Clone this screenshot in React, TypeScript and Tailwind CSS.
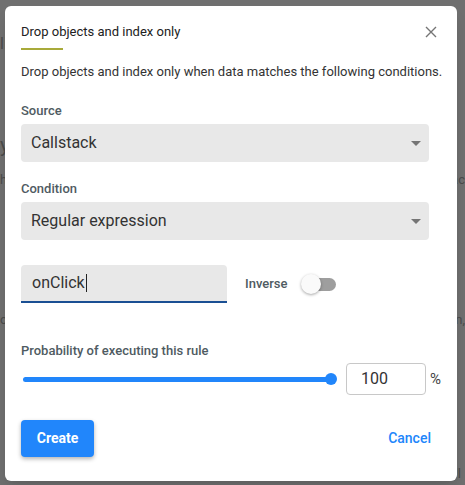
const BLUE = '#2186fb';

function Caret() {
  return (
    <svg width="10" height="5" viewBox="0 0 10 5" className="shrink-0">
      <path d="M0 0 L10 0 L5 5 Z" fill="#757575" />
    </svg>
  );
}

function SelectBox({ value }: { value: string }) {
  return (
    <div className="mt-[5px] flex h-[38px] items-center justify-between rounded bg-[#e8e8e8] pl-[10px] pr-[8px]">
      <span className="text-[16px] text-[#333333]">{value}</span>
      <Caret />
    </div>
  );
}

function Label({ children }: { children: React.ReactNode }) {
  return <div className="text-[13px] leading-4 font-medium text-[#4f5b62]">{children}</div>;
}

export default function App() {
  return (
    <div
      className="relative h-[485px] w-[465px] overflow-hidden bg-[#6f6f6f]"
      style={{ fontFamily: 'Roboto, "Liberation Sans", sans-serif' }}
    >
      {/* page behind the overlay */}
      <div className="text-[#4a4a4a]">
        <div className="absolute left-0 top-[32px] text-[16px]">li</div>
        <div className="absolute left-0 top-[130px] text-[20px]">y</div>
        <div className="absolute left-0 top-[170px] text-[13px]">h</div>
        <div className="absolute right-0 top-[170px] text-[13px]">ac</div>
        <div className="absolute left-0 top-[310px] text-[13px]">ob</div>
        <div className="absolute right-0 top-[310px] text-[13px]">n,</div>
        <div className="absolute right-[4px] top-[466px] text-[13px] leading-4">ll</div>
      </div>

      <div className="absolute left-[5px] top-[6px] flex h-[475px] w-[452px] flex-col rounded-md bg-white pl-4 pr-[28px] pt-[18px] shadow-lg">
        <div className="flex items-center justify-between">
          <div className="text-[13px] leading-4 text-[#212121]">Drop objects and index only</div>
          <svg width="12" height="12" viewBox="0 0 12 12" className="mr-[-8px]">
            <path d="M1 1 L11 11 M11 1 L1 11" stroke="#757575" strokeWidth="1.4" />
          </svg>
        </div>
        <div className="mt-2 h-[2px] w-[42px] bg-[#a8aa3a]" />

        <div className="mt-[14px] whitespace-nowrap text-[13px] leading-4 text-[#333333]">
          Drop objects and index only when data matches the following conditions.
        </div>

        <div className="mt-[23px]">
          <Label>Source</Label>
        </div>
        <SelectBox value="Callstack" />

        <div className="mt-[19px]">
          <Label>Condition</Label>
        </div>
        <SelectBox value="Regular expression" />

        <div className="mt-[25px] flex items-center">
          <div className="flex h-[38px] w-[206px] shrink-0 items-center rounded-t border-b-2 border-[#1a4f93] bg-[#e8e8e8] pl-[11px]">
            <span className="text-[16px] text-[#333333]">onClick</span>
            <span className="ml-[1px] h-[18px] w-px bg-[#222222]" />
          </div>
          <div className="ml-[18px] text-[13px] font-medium text-[#4f5b62]">Inverse</div>
          <div className="relative ml-[13px] flex h-[20px] w-[35px] shrink-0 items-center">
            <div className="ml-[3px] h-[13px] w-[32px] rounded-full bg-[#9e9e9e]" />
            <div className="absolute left-0 top-0 h-[20px] w-[20px] rounded-full bg-[#fafafa] shadow-[0_1px_3px_rgba(0,0,0,0.35)]" />
          </div>
        </div>

        <div className="mt-[40px]">
          <Label>Probability of executing this rule</Label>
        </div>
        <div className="mt-[4px] flex h-[32px] items-center">
          <div className="relative ml-[2px] flex h-[12px] w-[315px] shrink-0 items-center">
            <div className="h-[5px] w-[308px] rounded-full" style={{ backgroundColor: BLUE }} />
            <div
              className="absolute left-[302px] top-0 h-[12px] w-[12px] rounded-full"
              style={{ backgroundColor: BLUE }}
            />
          </div>
          <div className="ml-[8px] flex h-[32px] w-[80px] shrink-0 items-center rounded border border-[#c8c8c8] pl-[14px] text-[16px] text-[#333333]">
            100
          </div>
          <div className="ml-[4px] shrink-0 text-[15px] text-[#444444]">%</div>
        </div>

        <div className="mt-[25px] flex items-center justify-between">
          <div
            className="flex h-[37px] w-[73px] items-center justify-center rounded text-[14px] font-bold text-white shadow-[0_2px_4px_rgba(0,0,0,0.3)]"
            style={{ backgroundColor: BLUE }}
          >
            Create
          </div>
          <div className="mr-[-2px] text-[14px] font-medium" style={{ color: BLUE }}>
            Cancel
          </div>
        </div>
      </div>
    </div>
  );
}
